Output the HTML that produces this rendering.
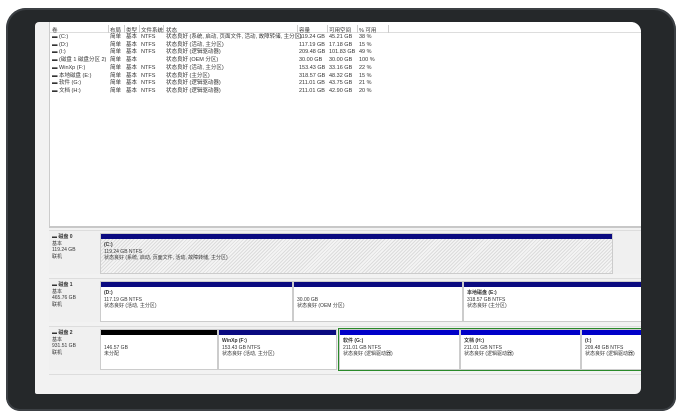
<!DOCTYPE html>
<html><head><meta charset="utf-8"><style>
*{margin:0;padding:0;box-sizing:border-box}
body{width:680px;height:418px;background:#fff;position:relative;overflow:hidden;font-family:"Liberation Sans","Noto Sans CJK SC",sans-serif;font-size:5.5px;color:#333}
.bez{position:absolute;left:6px;top:8px;width:670px;height:403px;background:#25282a;border-radius:20px 22px 14px 14px;box-shadow:inset 0 0 0 2px #3c4044}
.scr{position:absolute;left:35px;top:22px;width:606px;height:372px;background:#f2f2f2;border-radius:4px 10px 6px 2px;overflow:hidden}
.a{position:absolute;white-space:nowrap}
.list{position:absolute;left:14px;top:0;width:592px;height:204px;background:#fff;border-left:1px solid #ccc}
.hdr{position:absolute;left:0;top:3px;width:592px;height:8px;border-bottom:1px solid #ddd}
.sep{position:absolute;top:3px;width:1px;height:8px;background:#ccc}
.disk{position:absolute;left:14px;width:592px;height:44px;background:#f0f0f0;border-top:1px solid #ddd}
.lab{position:absolute;left:3px;top:3px;line-height:6.5px;font-size:5px}
.p{position:absolute;top:2px;height:41px;background:#fff;border:1px solid #ccc}
.p .bar{position:absolute;left:0;top:0;right:0;height:5px;background:#0a0a80}
.p .t{position:absolute;left:3px;top:8px;line-height:6.5px;font-size:5px}
.hat{background:repeating-linear-gradient(135deg,#f4f4f4 0 1.5px,#dcdcdc 1.5px 2.5px)}
</style></head><body>
<div class="bez"></div>
<div class="scr">
<div class="list">
 <div class="hdr"></div>
 <div class="sep" style="left:58px"></div><div class="sep" style="left:74px"></div><div class="sep" style="left:89px"></div><div class="sep" style="left:113px"></div><div class="sep" style="left:247px"></div><div class="sep" style="left:277px"></div><div class="sep" style="left:307px"></div><div class="sep" style="left:338px"></div>
 <div class="a" style="left:2px;top:4px">卷</div><div class="a" style="left:60px;top:4px">布局</div><div class="a" style="left:76px;top:4px">类型</div><div class="a" style="left:91px;top:4px">文件系统</div><div class="a" style="left:116px;top:4px">状态</div><div class="a" style="left:249px;top:4px">容量</div><div class="a" style="left:279px;top:4px">可用空间</div><div class="a" style="left:309px;top:4px">% 可用</div>
 <div style="position:absolute;left:2px;top:12px;line-height:7.7px">
 <div>▬ (C:)</div><div>▬ (D:)</div><div>▬ (I:)</div><div>▬ (磁盘 1 磁盘分区 2)</div><div>▬ WinXp (F:)</div><div>▬ 本地磁盘 (E:)</div><div>▬ 软件 (G:)</div><div>▬ 文档 (H:)</div></div>
 <div style="position:absolute;left:60px;top:12px;line-height:7.7px"><div>简单</div><div>简单</div><div>简单</div><div>简单</div><div>简单</div><div>简单</div><div>简单</div><div>简单</div></div>
 <div style="position:absolute;left:76px;top:12px;line-height:7.7px"><div>基本</div><div>基本</div><div>基本</div><div>基本</div><div>基本</div><div>基本</div><div>基本</div><div>基本</div></div>
 <div style="position:absolute;left:91px;top:12px;line-height:7.7px"><div>NTFS</div><div>NTFS</div><div>NTFS</div><div>&nbsp;</div><div>NTFS</div><div>NTFS</div><div>NTFS</div><div>NTFS</div></div>
 <div style="position:absolute;left:116px;top:12px;line-height:7.7px;white-space:nowrap"><div>状态良好 (系统, 启动, 页面文件, 活动, 故障转储, 主分区)</div><div>状态良好 (活动, 主分区)</div><div>状态良好 (逻辑驱动器)</div><div>状态良好 (OEM 分区)</div><div>状态良好 (活动, 主分区)</div><div>状态良好 (主分区)</div><div>状态良好 (逻辑驱动器)</div><div>状态良好 (逻辑驱动器)</div></div>
 <div style="position:absolute;left:249px;top:12px;line-height:7.7px"><div>119.24 GB</div><div>117.19 GB</div><div>209.48 GB</div><div>30.00 GB</div><div>153.43 GB</div><div>318.57 GB</div><div>211.01 GB</div><div>211.01 GB</div></div>
 <div style="position:absolute;left:279px;top:12px;line-height:7.7px"><div>45.21 GB</div><div>17.18 GB</div><div>101.83 GB</div><div>30.00 GB</div><div>33.16 GB</div><div>48.32 GB</div><div>43.75 GB</div><div>42.90 GB</div></div>
 <div style="position:absolute;left:309px;top:12px;line-height:7.7px"><div>38 %</div><div>15 %</div><div>49 %</div><div>100 %</div><div>22 %</div><div>15 %</div><div>21 %</div><div>20 %</div></div>
</div>
<div style="position:absolute;left:14px;top:204px;width:592px;height:2px;background:#c8c8c8"></div>

<div class="disk" style="top:208px">
 <div class="lab"><b>▬ 磁盘 0</b><br>基本<br>119.24 GB<br>联机</div>
 <div class="p hat" style="left:51px;width:513px"><div class="bar"></div><div class="t"><b>(C:)</b><br>119.24 GB NTFS<br>状态良好 (系统, 启动, 页面文件, 活动, 故障转储, 主分区)</div></div>
</div>
<div class="disk" style="top:256px">
 <div class="lab"><b>▬ 磁盘 1</b><br>基本<br>465.76 GB<br>联机</div>
 <div class="p" style="left:51px;width:193px"><div class="bar"></div><div class="t"><b>(D:)</b><br>117.19 GB NTFS<br>状态良好 (活动, 主分区)</div></div>
 <div class="p" style="left:244px;width:170px"><div class="bar"></div><div class="t"><br>30.00 GB<br>状态良好 (OEM 分区)</div></div>
 <div class="p" style="left:414px;width:180px"><div class="bar"></div><div class="t"><b>本地磁盘 (E:)</b><br>318.57 GB NTFS<br>状态良好 (主分区)</div></div>
</div>
<div class="disk" style="top:304px">
 <div class="lab"><b>▬ 磁盘 2</b><br>基本<br>931.51 GB<br>联机</div>
 <div class="p" style="left:51px;width:118px"><div class="bar" style="background:#000"></div><div class="t"><br>146.57 GB<br>未分配</div></div>
 <div class="p" style="left:169px;width:119px"><div class="bar"></div><div class="t"><b>WinXp (F:)</b><br>153.43 GB NTFS<br>状态良好 (活动, 主分区)</div></div>
 <div style="position:absolute;left:289px;top:1px;width:305px;height:43px;border:1px solid #2a8a2a"></div>
 <div class="p" style="left:290px;width:121px"><div class="bar" style="background:#0000c8"></div><div class="t"><b>软件 (G:)</b><br>211.01 GB NTFS<br>状态良好 (逻辑驱动器)</div></div>
 <div class="p" style="left:411px;width:121px"><div class="bar" style="background:#0000c8"></div><div class="t"><b>文档 (H:)</b><br>211.01 GB NTFS<br>状态良好 (逻辑驱动器)</div></div>
 <div class="p" style="left:532px;width:70px"><div class="bar" style="background:#0000c8"></div><div class="t"><b>(I:)</b><br>209.48 GB NTFS<br>状态良好 (逻辑驱动器)</div></div>
</div>
<div style="position:absolute;left:14px;top:352px;width:592px;height:1px;background:#ddd"></div>
</div>
</body></html>
